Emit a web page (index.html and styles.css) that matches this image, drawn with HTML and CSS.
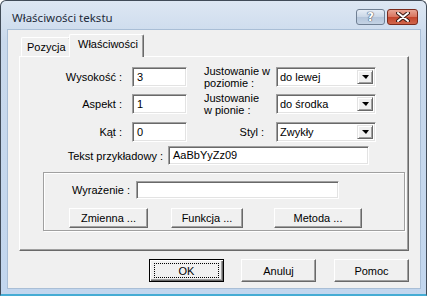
FILE: index.html
```html
<!DOCTYPE html>
<html lang="pl">
<head>
  <meta charset="UTF-8">
  <title>Właściwości tekstu</title>
  <link rel="stylesheet" href="styles.css">
</head>
<body>
  <div class="window">
    <div class="titlebar">
      <span class="title">Właściwości tekstu</span>
      <div class="caption-btns">
        <span class="cap-btn help">?</span>
        <span class="cap-btn close">
          <svg width="14" height="10" viewBox="0 0 14 10">
            <path d="M2 1 L12 9 M12 1 L2 9" stroke="#3a1a14" stroke-width="4" stroke-linecap="round"/>
            <path d="M2 1 L12 9 M12 1 L2 9" stroke="#fff" stroke-width="2" stroke-linecap="round"/>
          </svg>
        </span>
      </div>
    </div>

    <div class="client">
      <!-- Onglets -->
      <div class="tabs">
        <span class="tab">Pozycja</span>
        <span class="tab active">Właściwości</span>
      </div>

      <div class="panel">
        <div class="row">
          <label class="lbl">Wysokość :</label>
          <span class="edit num">3</span>
          <label class="rlbl">Justowanie w<br>poziomie :</label>
          <span class="combo"><span class="combo-text">do lewej</span><span class="drop"></span></span>
        </div>
        <div class="row r2">
          <label class="lbl">Aspekt :</label>
          <span class="edit num">1</span>
          <label class="rlbl">Justowanie<br>w pionie :</label>
          <span class="combo"><span class="combo-text">do środka</span><span class="drop"></span></span>
        </div>
        <div class="row r3">
          <label class="lbl">Kąt :</label>
          <span class="edit num">0</span>
          <label class="rlbl right">Styl :</label>
          <span class="combo"><span class="combo-text">Zwykły</span><span class="drop"></span></span>
        </div>
        <div class="row r4">
          <label class="lbl wide">Tekst przykładowy :</label>
          <span class="edit sample">AaBbYyZz09</span>
        </div>

        <div class="group">
          <div class="row expr">
            <label class="lbl glbl">Wyrażenie :</label>
            <span class="edit expr-edit"></span>
          </div>
          <div class="group-btns">
            <span class="btn b-var">Zmienna ...</span>
            <span class="btn b-fn">Funkcja ...</span>
            <span class="btn b-met">Metoda ...</span>
          </div>
        </div>
      </div>

      <div class="footer">
        <span class="btn dlg default"><span class="focus">OK</span></span>
        <span class="btn dlg">Anuluj</span>
        <span class="btn dlg">Pomoc</span>
      </div>
    </div>
  </div>
</body>
</html>
```

FILE: styles.css
```css
html, body {
  margin: 0;
  padding: 0;
  background-color: #fff;
}

.window {
  width: 427px;
  height: 296px;
  box-sizing: border-box;
  border: 1px solid #414b58;
  border-bottom: 2px solid #45acd4;
  border-radius: 6px 6px 0 0;
  background: linear-gradient(#dde7f3, #c9d9ec 40px, #c2d6ee);
  padding: 0 6px 0 7px;
  display: flex;
  flex-direction: column;
  font-family: 'Liberation Sans', Arial, sans-serif;
  font-size: 11px;
  color: #000;
}

.titlebar {
  height: 29px;
  display: flex;
  align-items: center;
  justify-content: space-between;
}

.title {
  font-family: 'Noto Sans', sans-serif;
  font-size: 11.5px;
  color: #1e2b3a;
  margin-left: 4px;
  margin-top: 4px;
}

.caption-btns {
  display: flex;
  gap: 2px;
  margin-top: 3px;
  margin-right: 2px;
}

.cap-btn {
  height: 14px;
  box-sizing: content-box;
  border: 1px solid #6f7f93;
  border-radius: 3px;
  display: flex;
  align-items: center;
  justify-content: center;
}

.help {
  width: 27px;
  background: linear-gradient(#e6edf6, #c9d6e6 50%, #b4c5da 51%, #c4d3e5);
  color: #fff;
  font-family: 'DejaVu Sans', sans-serif;
  font-weight: bold;
  font-size: 12px;
  text-shadow: 0 0 1px #44546a, 0 0 1px #44546a, 0 0 1px #44546a;
}

.close {
  width: 29px;
  border-color: #7a2a1c;
  background: linear-gradient(#e8a493, #d8735d 50%, #c3432a 51%, #d0664c);
}

.client {
  height: 258px;
  background-color: #f0f0f0;
  box-shadow: 0 0 0 1px #a9bed6;
  padding-top: 4px;
  box-sizing: border-box;
}

.tabs {
  display: flex;
  align-items: flex-end;
  height: 22px;
  margin-left: 13px;
}

.tab {
  height: 19px;
  box-sizing: border-box;
  width: 50px;
  border-top: 1px solid #fff;
  border-left: 1px solid #fff;
  border-right: 1px solid #696969;
  box-shadow: inset -1px 0 #a0a0a0;
  border-radius: 2px 2px 0 0;
  padding: 3px 0 0 5px;
}

.tab.active {
  width: 75px;
  height: 23px;
  margin-left: -2px;
  margin-bottom: -1px;
  padding: 3px 0 0 8px;
  background-color: #f0f0f0;
  position: relative;
  z-index: 1;
}

.panel {
  width: 390px;
  height: 195px;
  margin-left: 11px;
  box-sizing: border-box;
  border-top: 1px solid #fff;
  border-left: 1px solid #fff;
  border-right: 1px solid #696969;
  border-bottom: 1px solid #696969;
  box-shadow: inset -1px -1px #a0a0a0;
  padding-top: 10px;
}

.row {
  display: flex;
  align-items: center;
  height: 20px;
}

.r2 {
  margin-top: 7px;
}

.r3 {
  margin-top: 8px;
}

.r4 {
  margin-top: 4px;
  height: 19px;
}

.lbl {
  width: 112px;
  box-sizing: border-box;
  padding-right: 10px;
  text-align: right;
}

.lbl.wide {
  width: 148px;
  padding-right: 5px;
}

.edit {
  height: 20px;
  box-sizing: border-box;
  background-color: #fff;
  border-top: 1px solid #a0a0a0;
  border-left: 1px solid #a0a0a0;
  border-right: 1px solid #fff;
  border-bottom: 1px solid #fff;
  box-shadow: inset 1px 1px #696969, inset -1px -1px #e3e3e3;
  padding: 3px 0 0 4px;
  line-height: 13px;
}

.num {
  width: 55px;
}

.sample {
  width: 201px;
  height: 19px;
  padding-top: 2px;
}

.rlbl {
  width: 72px;
  margin-left: 17px;
  line-height: 12px;
}

.rlbl.right {
  text-align: right;
  padding-right: 12px;
  box-sizing: border-box;
}

.combo {
  width: 100px;
  height: 20px;
  box-sizing: border-box;
  background-color: #fff;
  border-top: 1px solid #a0a0a0;
  border-left: 1px solid #a0a0a0;
  border-right: 1px solid #fff;
  border-bottom: 1px solid #fff;
  box-shadow: inset 1px 1px #696969, inset -1px -1px #e3e3e3;
  display: flex;
  padding: 2px;
}

.combo-text {
  flex: 1;
  padding: 1px 0 0 1px;
}

.drop {
  width: 16px;
  box-sizing: border-box;
  background-color: #f0f0f0;
  border-top: 1px solid #e3e3e3;
  border-left: 1px solid #e3e3e3;
  border-right: 1px solid #696969;
  border-bottom: 1px solid #696969;
  box-shadow: inset 1px 1px #fff, inset -1px -1px #a0a0a0;
  display: flex;
  align-items: center;
  justify-content: center;
}

.drop::after {
  content: "";
  border-left: 4px solid transparent;
  border-right: 3px solid transparent;
  border-top: 4px solid #000;
}

.group {
  width: 362px;
  height: 59px;
  margin: 7px 0 0 23px;
  box-sizing: border-box;
  border: 1px solid #a0a0a0;
  box-shadow: inset 1px 1px #fff, 1px 1px #fff;
  padding-top: 8px;
}

.expr {
  height: 18px;
}

.glbl {
  width: 92px;
  padding-right: 6px;
}

.expr-edit {
  width: 203px;
  height: 18px;
}

.group-btns {
  display: flex;
  margin-top: 9px;
}

.btn {
  height: 20px;
  box-sizing: border-box;
  background-color: #f0f0f0;
  border-top: 1px solid #fff;
  border-left: 1px solid #fff;
  border-right: 1px solid #696969;
  border-bottom: 1px solid #696969;
  box-shadow: inset -1px -1px #a0a0a0;
  display: flex;
  align-items: center;
  justify-content: center;
}

.b-var {
  width: 79px;
  margin-left: 25px;
}

.b-fn {
  width: 72px;
  margin-left: 23px;
}

.b-met {
  width: 88px;
  margin-left: 31px;
}

.footer {
  display: flex;
  justify-content: flex-end;
  gap: 18px;
  padding-right: 11px;
  margin-top: 8px;
}

.btn.dlg {
  width: 75px;
  height: 23px;
}

.btn.default {
  border: 1px solid #000;
  box-shadow: inset 1px 1px #fff, inset -1px -1px #696969, inset -2px -2px #a0a0a0;
  margin-right: -1px;
}

.focus {
  width: 65px;
  height: 15px;
  box-sizing: border-box;
  border: 1px dotted #000;
  display: flex;
  align-items: center;
  justify-content: center;
}
```
